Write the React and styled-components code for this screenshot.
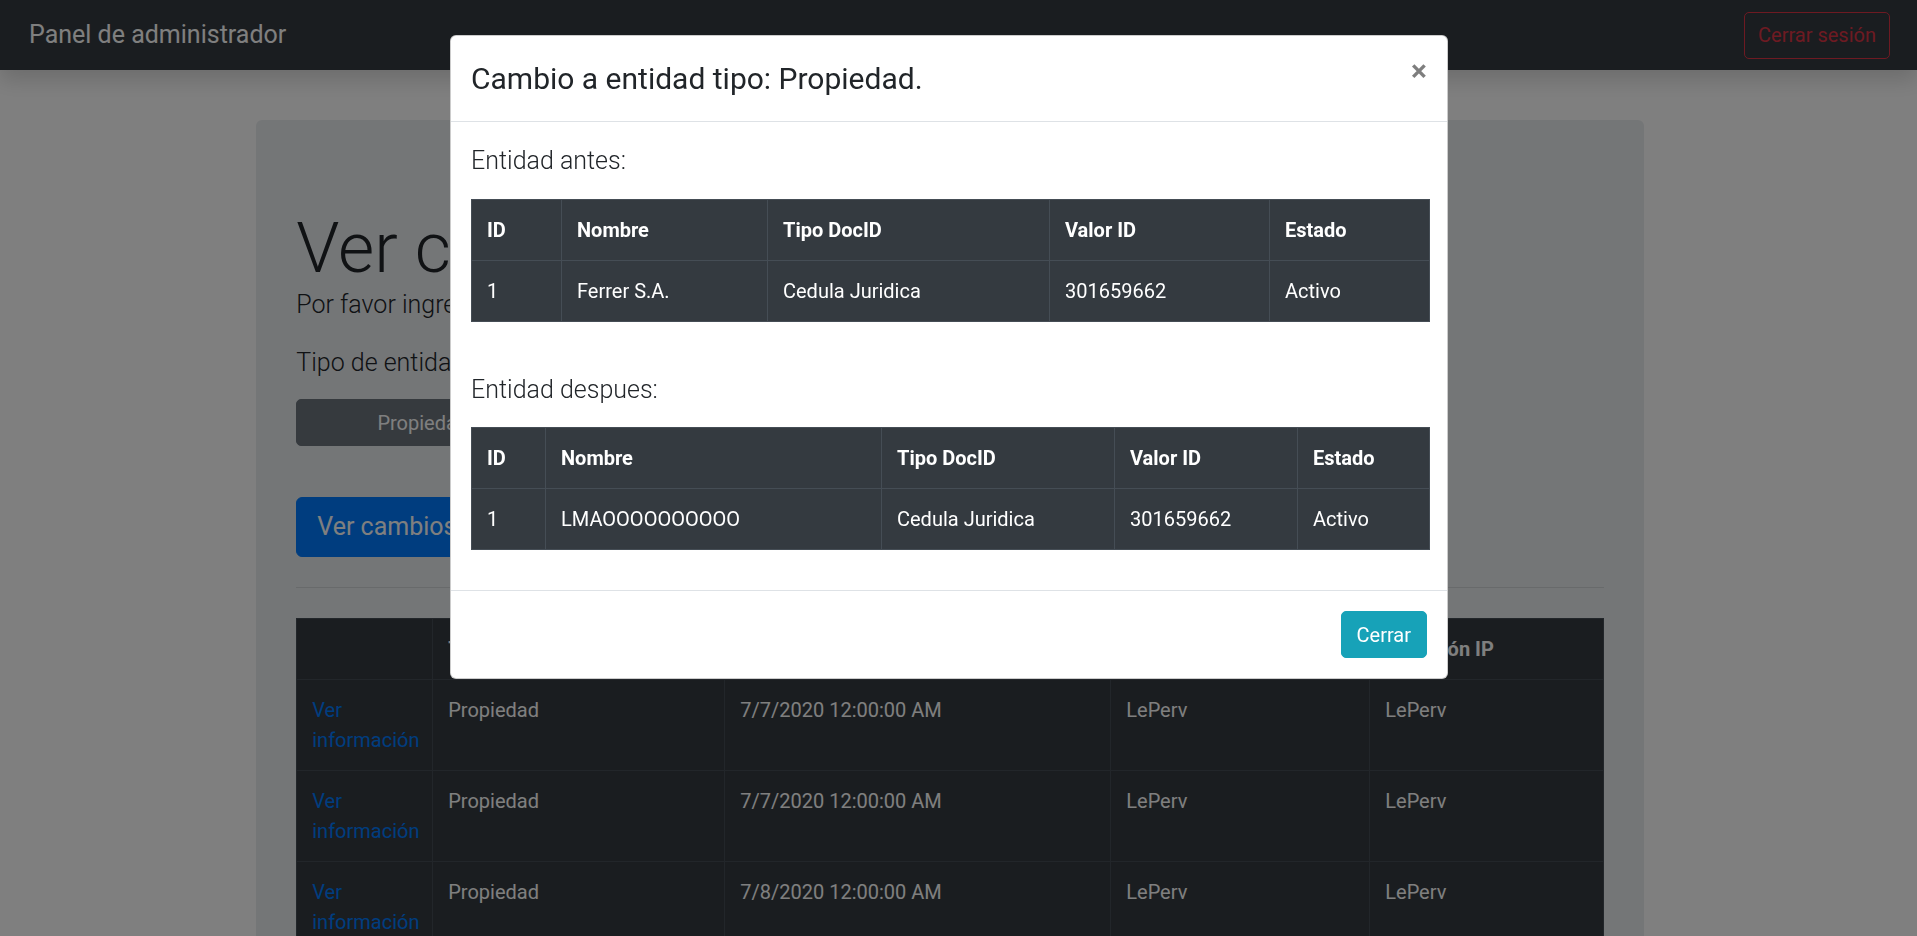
import React from 'react'
import styled, { createGlobalStyle } from 'styled-components'

const GlobalStyle = createGlobalStyle`
  *, *::before, *::after { box-sizing: border-box; }
  html, body {
    margin: 0;
    height: 100%;
    overflow: hidden;
  }
  body {
    font-family: Roboto, "Noto Sans", "Liberation Sans", sans-serif;
    font-size: 20px;
    line-height: 1.5;
    color: #212529;
    background: #fff;
  }
`;

const changes = [
    { tipo: 'Propiedad', fecha: '7/7/2020 12:00:00 AM', usuario: 'LePerv', ip: 'LePerv' },
    { tipo: 'Propiedad', fecha: '7/7/2020 12:00:00 AM', usuario: 'LePerv', ip: 'LePerv' },
    { tipo: 'Propiedad', fecha: '7/8/2020 12:00:00 AM', usuario: 'LePerv', ip: 'LePerv' },
    { tipo: 'Propiedad', fecha: '7/8/2020 12:00:00 AM', usuario: 'LePerv', ip: 'LePerv' },
]

const antes = { id: 1, nombre: 'Ferrer S.A.', tipoDoc: 'Cedula Juridica', valor: '301659662', estado: 'Activo' }
const despues = { id: 1, nombre: 'LMAOOOOOOOOOO', tipoDoc: 'Cedula Juridica', valor: '301659662', estado: 'Activo' }

function EntityTable({ entity, widths }) {
    return (
        <DataTable>
            <colgroup>
                {widths.map((w, i) => <col key={i} style={{ width: w }} />)}
            </colgroup>
            <thead>
                <tr>
                    <th>ID</th>
                    <th>Nombre</th>
                    <th>Tipo DocID</th>
                    <th>Valor ID</th>
                    <th>Estado</th>
                </tr>
            </thead>
            <tbody>
                <tr>
                    <td>{entity.id}</td>
                    <td>{entity.nombre}</td>
                    <td>{entity.tipoDoc}</td>
                    <td>{entity.valor}</td>
                    <td>{entity.estado}</td>
                </tr>
            </tbody>
        </DataTable>
    )
}

function App() {
    return (
        <>
            <GlobalStyle />
            <Navbar>
                <Brand href="#">Panel de administrador</Brand>
                <LogoutButton>Cerrar sesión</LogoutButton>
            </Navbar>
            <Main>
                <Container>
                    <Jumbotron>
                        <Display>Ver cambios</Display>
                        <Lead>Por favor ingrese el tipo de entidad para ver sus cambios.</Lead>
                        <Lead $mb={18}>Tipo de entidad:</Lead>
                        <ButtonGroup>
                            <GroupButton>Propiedad</GroupButton>
                            <GroupButton>Propietario</GroupButton>
                            <GroupButton>Contrato</GroupButton>
                        </ButtonGroup>
                        <PrimaryLarge>Ver cambios</PrimaryLarge>
                        <Rule />
                        <ChangesTable>
                            <colgroup>
                                <col style={{ width: 136 }} />
                                <col style={{ width: 292 }} />
                                <col style={{ width: 386 }} />
                                <col style={{ width: 259 }} />
                                <col style={{ width: 234 }} />
                            </colgroup>
                            <thead>
                                <tr>
                                    <th></th>
                                    <th>Tipo de entidad</th>
                                    <th>Fecha</th>
                                    <th>Usuario</th>
                                    <th>Dirección IP</th>
                                </tr>
                            </thead>
                            <tbody>
                                {changes.map((c, i) => (
                                    <tr key={i}>
                                        <td><InfoLink href="#">Ver información</InfoLink></td>
                                        <td>{c.tipo}</td>
                                        <td>{c.fecha}</td>
                                        <td>{c.usuario}</td>
                                        <td>{c.ip}</td>
                                    </tr>
                                ))}
                            </tbody>
                        </ChangesTable>
                    </Jumbotron>
                </Container>
            </Main>

            <Backdrop />
            <ModalWrap>
                <Dialog>
                    <ModalHeader>
                        <ModalTitle>Cambio a entidad tipo: Propiedad.</ModalTitle>
                        <CloseButton aria-label="Close">×</CloseButton>
                    </ModalHeader>
                    <ModalBody>
                        <Lead $mb={19}>Entidad antes:</Lead>
                        <EntityTable entity={antes} widths={[90, 206, 282, 220, 160]} />
                        <Lead $mt={49} $mb={19}>Entidad despues:</Lead>
                        <EntityTable entity={despues} widths={[74, 336, 233, 183, 132]} />
                    </ModalBody>
                    <ModalFooter>
                        <InfoButton>Cerrar</InfoButton>
                    </ModalFooter>
                </Dialog>
            </ModalWrap>
        </>
    )
}

const Navbar = styled.nav`
    position: relative;
    z-index: 2;
    height: 70px;
    display: flex;
    align-items: center;
    justify-content: space-between;
    padding: 0 27px 0 29px;
    background: #343a40;
    box-shadow: 0 10px 20px rgba(0, 0, 0, 0.15);
`;

const Brand = styled.a`
    font-size: 25px;
    line-height: 37.5px;
    color: #fff;
    text-decoration: none;
`;

const LogoutButton = styled.button`
    font-family: inherit;
    font-size: 20px;
    line-height: 30px;
    padding: 7.5px 13px;
    color: #dc3545;
    background: transparent;
    border: 1px solid #dc3545;
    border-radius: 5px;
`;

const Main = styled.main`
    padding-right: 17px;
`;

const Container = styled.div`
    width: 1425px;
    margin: 0 auto;
    padding: 0 18.75px;
`;

const Jumbotron = styled.section`
    margin-top: 50px;
    padding: 86px 40px 80px;
    background: #e9ecef;
    border-radius: 6px;
`;

const Display = styled.h1`
    margin: 0 0 -4px;
    font-size: 70px;
    font-weight: 300;
    line-height: 1.2;
`;

const Lead = styled.p`
    margin: ${p => p.$mt || 0}px 0 ${p => (p.$mb === undefined ? 20 : p.$mb)}px;
    font-size: 25px;
    font-weight: 300;
    line-height: 1.5;
`;

const ButtonGroup = styled.div`
    display: flex;
`;

const GroupButton = styled.button`
    width: 253px;
    font-family: inherit;
    font-size: 20px;
    line-height: 30px;
    padding: 7.5px 15px;
    color: #fff;
    background: #6c757d;
    border: 1px solid #6c757d;
    border-radius: 0;
    &:first-child { border-radius: 5px 0 0 5px; }
    &:last-child { border-radius: 0 5px 5px 0; }
`;

const PrimaryLarge = styled.button`
    display: block;
    margin-top: 51px;
    font-family: inherit;
    font-size: 25px;
    line-height: 37.5px;
    padding: 10px 20px;
    color: #fff;
    background: #007bff;
    border: 1px solid #007bff;
    border-radius: 6px;
`;

const Rule = styled.hr`
    margin: 30px 0;
    border: 0;
    border-top: 1px solid rgba(0, 0, 0, 0.1);
`;

const ChangesTable = styled.table`
    width: 100%;
    table-layout: fixed;
    border-collapse: collapse;
    background: #343a40;
    color: #fff;
    th, td {
        padding: 15px;
        border: 1px solid #454d55;
        text-align: left;
        vertical-align: top;
    }
    th { font-weight: 700; }
`;

const InfoLink = styled.a`
    color: #007bff;
    text-decoration: none;
`;

const Backdrop = styled.div`
    position: fixed;
    inset: 0;
    z-index: 1040;
    background: rgba(0, 0, 0, 0.5);
`;

const ModalWrap = styled.div`
    position: fixed;
    inset: 0;
    z-index: 1050;
    padding-right: 19px;
    overflow: hidden;
`;

const Dialog = styled.div`
    width: 998px;
    margin: 35px auto;
    background: #fff;
    border: 1px solid rgba(0, 0, 0, 0.2);
    border-radius: 6px;
`;

const ModalHeader = styled.header`
    display: flex;
    align-items: flex-start;
    justify-content: space-between;
    padding: 20px;
    border-bottom: 1px solid #dee2e6;
`;

const ModalTitle = styled.h4`
    margin: 0;
    font-size: 30px;
    font-weight: 400;
    line-height: 1.5;
`;

const CloseButton = styled.button`
    margin: -20px -20px -20px auto;
    padding: 20px;
    font-family: inherit;
    font-size: 30px;
    font-weight: 700;
    line-height: 1;
    color: #000;
    text-shadow: 0 1px 0 #fff;
    opacity: 0.5;
    background: transparent;
    border: 0;
`;

const ModalBody = styled.div`
    padding: 20px;
`;

const DataTable = styled.table`
    width: 100%;
    table-layout: fixed;
    border-collapse: collapse;
    margin-bottom: 20px;
    background: #343a40;
    color: #fff;
    th, td {
        padding: 15px;
        border: 1px solid #454d55;
        text-align: left;
        vertical-align: top;
        white-space: nowrap;
    }
    th { font-weight: 700; }
`;

const ModalFooter = styled.footer`
    display: flex;
    justify-content: flex-end;
    padding: 15px;
    border-top: 1px solid #dee2e6;
`;

const InfoButton = styled.button`
    margin: 5px;
    font-family: inherit;
    font-size: 20px;
    line-height: 30px;
    padding: 7.5px 15px;
    color: #fff;
    background: #17a2b8;
    border: 1px solid #17a2b8;
    border-radius: 5px;
`;

export default App
